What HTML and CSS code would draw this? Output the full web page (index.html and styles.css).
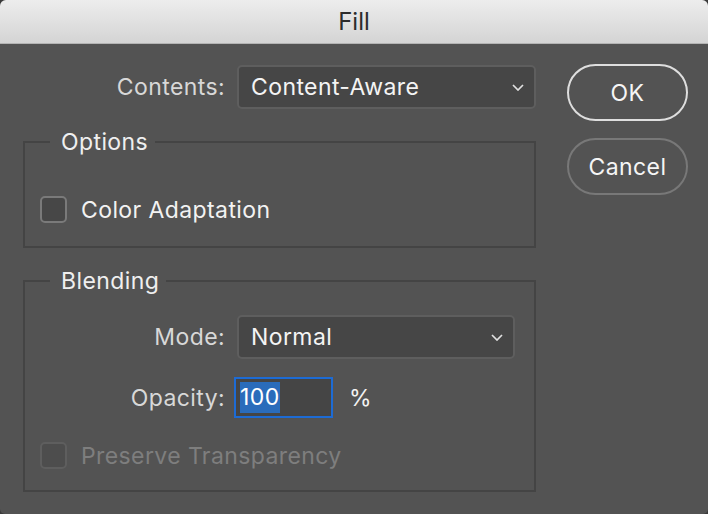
FILE: index.html
```html
<!DOCTYPE html>
<html>
<head>
<meta charset="utf-8">
<link rel="stylesheet" href="styles.css">
</head>
<body>
<div class="window">
  <div class="titlebar">Fill</div>
  <div class="content">
    <div class="main">
      <div class="contents-row">
        <span class="label">Contents:</span>
        <div class="select select-contents">
          <span class="value">Content-Aware</span>
          <svg class="chev" width="12" height="7" viewBox="0 0 12 7"><polyline points="1,1 6,6 11,1" fill="none" stroke="#e0e0e0" stroke-width="1.7"/></svg>
        </div>
      </div>

      <fieldset class="group group-options">
        <legend>Options</legend>
        <div class="check">
          <span class="box"></span>
          <span class="check-text">Color Adaptation</span>
        </div>
      </fieldset>

      <fieldset class="group group-blending">
        <legend>Blending</legend>
        <div class="form-grid">
          <span class="label">Mode:</span>
          <div class="select select-mode">
            <span class="value">Normal</span>
            <svg class="chev" width="12" height="7" viewBox="0 0 12 7"><polyline points="1,1 6,6 11,1" fill="none" stroke="#e0e0e0" stroke-width="1.7"/></svg>
          </div>
          <span class="label">Opacity:</span>
          <div class="opacity-wrap">
            <div class="input"><span class="sel">100</span></div>
            <span class="unit">%</span>
          </div>
        </div>
        <div class="check check-disabled">
          <span class="box"></span>
          <span class="check-text">Preserve Transparency</span>
        </div>
      </fieldset>
    </div>

    <div class="buttons">
      <div class="btn btn-ok">OK</div>
      <div class="btn btn-cancel">Cancel</div>
    </div>
  </div>
</div>
</body>
</html>
```

FILE: styles.css
```css
html, body {
  margin: 0;
  padding: 0;
  background: #3a3a3a;
}
body {
  width: 708px;
  height: 514px;
  overflow: hidden;
  font-family: "Inter", "Noto Sans", sans-serif;
  letter-spacing: 0.4px;
}
.window {
  width: 708px;
  height: 514px;
  background: #535353;
  border-radius: 6px 6px 5px 5px;
  overflow: hidden;
}
.titlebar {
  height: 43px;
  line-height: 44px;
  text-align: center;
  font-size: 24px;
  letter-spacing: 0;
  color: #2c2c2c;
  background: linear-gradient(#ededed, #d4d4d4);
  border-bottom: 1px solid #b4b4b4;
}
.content {
  display: flex;
  align-items: flex-start;
  padding: 21px 0 0 23px;
  gap: 31px;
}
.main {
  width: 513px;
}
.label {
  font-size: 23px;
  color: #d8d8d8;
  text-align: right;
}
.contents-row {
  display: flex;
  align-items: center;
  gap: 12px;
}
.contents-row .label {
  width: 202px;
}
.select {
  box-sizing: border-box;
  height: 44px;
  background: #464646;
  border: 2px solid #5e5e5e;
  border-radius: 5px;
  display: flex;
  align-items: center;
  justify-content: space-between;
  padding: 0 10px 0 12px;
}
.select-contents {
  flex: 1;
}
.select-mode {
  width: 278px;
}
.value {
  font-size: 23px;
  color: #f4f4f4;
}
.chev {
  display: block;
}
.group {
  margin: 20px 0 0 0;
  padding: 0;
  border: 2px solid #444444;
  min-width: 0;
}
.group legend {
  margin-left: 25px;
  padding: 0 7px 0 11px;
  font-size: 23px;
  line-height: 26px;
  color: #efefef;
}
.check {
  display: flex;
  align-items: center;
  gap: 14px;
  margin-left: 15px;
  height: 27px;
}
.box {
  box-sizing: border-box;
  width: 27px;
  height: 27px;
  border: 2px solid #7a7a7a;
  border-radius: 5px;
  background: #474747;
}
.check-text {
  font-size: 23px;
  color: #f2f2f2;
}
.group-options .check {
  margin-top: 41px;
  margin-bottom: 23px;
}
.group-blending {
  margin-top: 20px;
}
.form-grid {
  display: grid;
  grid-template-columns: 200px auto;
  column-gap: 12px;
  row-gap: 18px;
  align-items: center;
  padding-top: 21px;
}
.opacity-wrap {
  display: flex;
  align-items: center;
  gap: 16px;
}
.input {
  box-sizing: border-box;
  width: 99px;
  height: 41px;
  margin-left: -3px;
  border: 2px solid #1d6bd4;
  background: #454545;
  display: flex;
  align-items: center;
  padding-left: 4px;
}
.sel {
  background: #2a6cbb;
  color: #ffffff;
  font-size: 23px;
  line-height: 31px;
}
.unit {
  font-size: 23px;
  color: #f2f2f2;
}
.check-disabled {
  margin-top: 24px;
  margin-bottom: 21px;
}
.check-disabled .box {
  border-color: #5e5e5e;
  background: #4d4d4d;
}
.check-disabled .check-text {
  color: #7e7e7e;
}
.buttons {
  display: flex;
  flex-direction: column;
  gap: 17px;
  margin-top: -1px;
}
.btn {
  box-sizing: border-box;
  width: 121px;
  height: 57px;
  border-radius: 29px;
  display: flex;
  align-items: center;
  justify-content: center;
  font-size: 23px;
  color: #f5f5f5;
}
.btn-ok {
  border: 2px solid #dedede;
}
.btn-cancel {
  border: 2px solid #787878;
}
```
